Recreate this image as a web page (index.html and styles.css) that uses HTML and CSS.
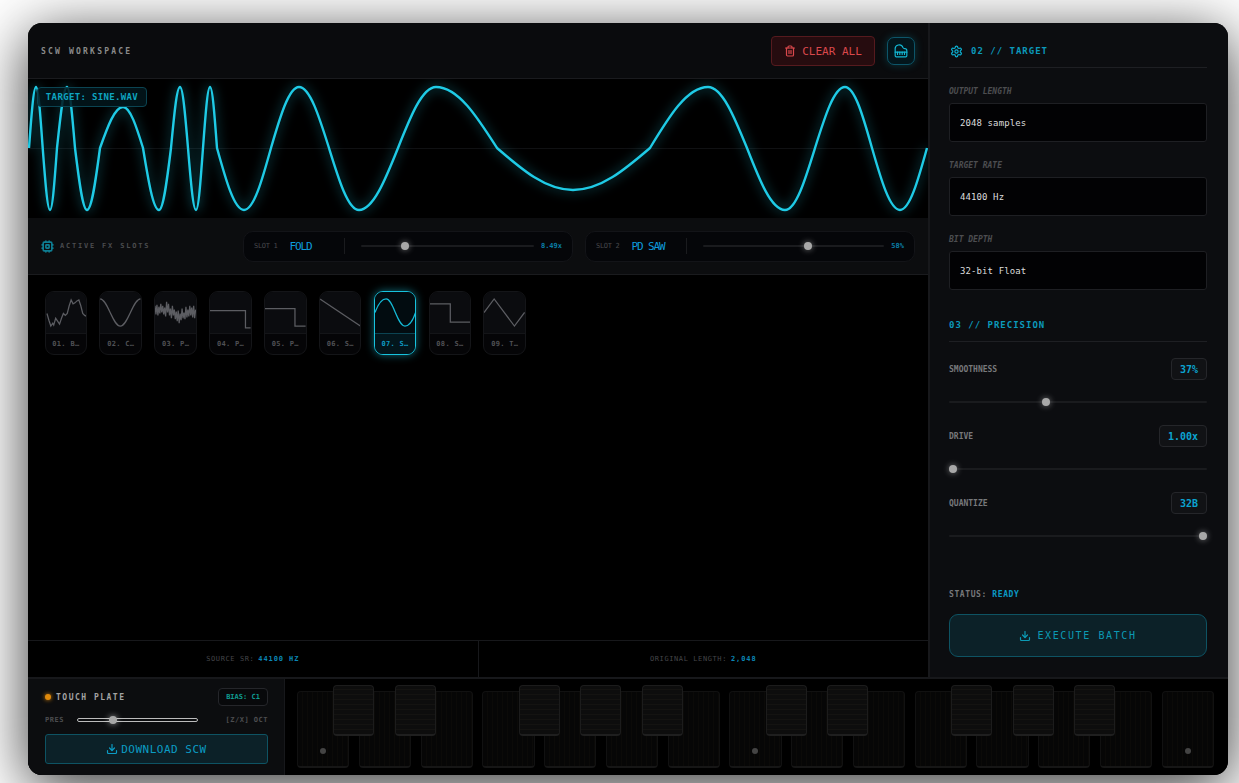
FILE: index.html
```html
<!DOCTYPE html>
<html lang="en-US">
  <head>
    <title>SCW Workspace</title>
    <meta charset="utf-8" />
    <link rel="stylesheet" href="styles.css">
  </head>
  <body>
    <div class="app">
      <div class="top">
        <main class="workspace">
          <header class="ws-header">
            <div class="ws-title">SCW WORKSPACE</div>
            <div class="ws-actions">
              <button class="btn-clear">
                <svg class="icon" viewBox="0 0 24 24"><path d="M3 6h18"/><path d="M19 6v14c0 1-1 2-2 2H7c-1 0-2-1-2-2V6"/><path d="M8 6V4c0-1 1-2 2-2h4c1 0 2 1 2 2v2"/><path d="M10 11v6"/><path d="M14 11v6"/></svg>
                CLEAR ALL
              </button>
              <button class="btn-piano">
                <svg class="icon-lg" viewBox="0 0 24 24"><path d="M18.5 8c-1.4 0-2.6-.8-3.2-2A6.87 6.87 0 0 0 2 9v11a2 2 0 0 0 2 2h16a2 2 0 0 0 2-2v-8.5C22 9.6 20.4 8 18.5 8"/><path d="M2 14h20"/><path d="M6 14v4"/><path d="M10 14v4"/><path d="M14 14v4"/><path d="M18 14v4"/></svg>
              </button>
            </div>
          </header>

          <section class="scope">
            <svg class="scope-svg" viewBox="28 79 900 139">
              <path class="scope-mid" d="M28 148.5H928"/>
              <path class="scope-wave" d="M29 148C31.3 116.8 33.5 87 36 87C38.4 87 40.5 116.8 42.7 148C45.1 179.8 47.4 210 50 210C52.5 210 54.7 179.8 57 148C60.3 116.8 63.4 87 67 87C69.9 87 72.4 116.8 75 148C78.9 179.8 82.7 210 87 210C91.7 210 95.8 179.8 100 148C107.5 127 114.7 107 123 107C130.2 107 136.5 127 143 148C148.2 179.8 153.2 210 159 210C163.3 210 167.1 179.8 171 148C173.9 116.8 176.7 87 180 87C182.9 87 185.4 116.8 188 148C190.6 179.8 193.1 210 196 210C198.5 210 200.7 179.8 203 148C205.3 116.8 207.5 87 210 87C212.5 87 214.7 116.8 217 148C225.8 179.8 234.2 210 244 210C253.8 210 262.2 179.8 271 148C280.1 116.8 288.9 87 299 87C309.9 87 319.2 116.8 329 148C338.8 179.8 348.1 210 359 210C373.1 210 385.3 179.8 398 148C410.4 116.8 422.2 87 436 87C458.1 87 477.1 116.8 497 148C521.8 169.5 545.5 190 573 190C600.9 190 624.9 169.5 650 148C668.9 116.8 687 87 708 87C722.1 87 734.3 116.8 747 148C759.4 179.8 771.2 210 785 210C795.9 210 805.2 179.8 815 148C824.8 116.8 834.1 87 845 87C854.8 87 863.2 116.8 872 148C881.1 179.8 889.9 210 900 210C909.8 210 918.2 179.8 927 148"/>
            </svg>
            <div class="scope-tag">TARGET: SINE.WAV</div>
          </section>

          <section class="fx-row">
            <div class="fx-title">
              <svg class="icon-cpu" viewBox="0 0 24 24"><rect x="4" y="4" width="16" height="16" rx="2"/><rect x="9" y="9" width="6" height="6" rx="1"/><path d="M15 2v2M15 20v2M2 15h2M2 9h2M20 15h2M20 9h2M9 2v2M9 20v2"/></svg>
              ACTIVE FX SLOTS
            </div>
            <div class="fx-slots">
              <div class="slot">
                <div class="slot-head"><span class="slot-num">SLOT 1</span><span class="slot-name">FOLD</span></div>
                <input class="range" type="range" min="0" max="100" value="24">
                <span class="slot-val">8.49x</span>
              </div>
              <div class="slot">
                <div class="slot-head"><span class="slot-num">SLOT 2</span><span class="slot-name">PD SAW</span></div>
                <input class="range" type="range" min="0" max="100" value="58">
                <span class="slot-val">58%</span>
              </div>
            </div>
          </section>

          <section class="bank">
            <div class="wave-card">
              <svg viewBox="0 0 42 42"><path d="M1 22L3 29L5 35L7 32L8 34L10 27L12 30L14 33L16 27L18 22L20 24L22 22L24 14L26 8L28 12L30 11L32 9L34 8L36 14L38 22L40 24L42 25"/></svg>
              <div class="wave-name">01. B…</div>
            </div>
            <div class="wave-card">
              <svg viewBox="0 0 42 42"><path d="M0 7C8 7 13 35 21 35C29 35 34 7 42 7"/></svg>
              <div class="wave-name">02. C…</div>
            </div>
            <div class="wave-card">
              <svg viewBox="0 0 42 42"><path d="M0 14L1 23L2 13L3 24L4 15L5 22L6 12L7 21L8 14L9 23L10 16L11 25L12 10L13 21L14 12L15 24L16 17L17 27L18 14L19 24L20 18L21 28L22 20L23 30L24 19L25 32L26 22L27 29L28 17L29 27L30 21L31 28L32 15L33 26L34 18L35 25L36 14L37 24L38 16L39 26L40 14L41 27L42 18"/></svg>
              <div class="wave-name">03. P…</div>
            </div>
            <div class="wave-card">
              <svg viewBox="0 0 42 42"><path d="M0 19H36.7V37H42"/></svg>
              <div class="wave-name">04. P…</div>
            </div>
            <div class="wave-card">
              <svg viewBox="0 0 42 42"><path d="M0 17H31V35H42"/></svg>
              <div class="wave-name">05. P…</div>
            </div>
            <div class="wave-card">
              <svg viewBox="0 0 42 42"><path d="M0 7L42 35"/></svg>
              <div class="wave-name">06. S…</div>
            </div>
            <div class="wave-card active">
              <svg viewBox="0 0 42 42"><path d="M0 21C3 13 7 7 11.5 7C19 7 23 35 31 35C35 35 39 30 42 21"/></svg>
              <div class="wave-name">07. S…</div>
            </div>
            <div class="wave-card">
              <svg viewBox="0 0 42 42"><path d="M0 12H21V31H42"/></svg>
              <div class="wave-name">08. S…</div>
            </div>
            <div class="wave-card">
              <svg viewBox="0 0 42 42"><path d="M0 21L10.5 7L31.5 35L42 21"/></svg>
              <div class="wave-name">09. T…</div>
            </div>
          </section>

          <footer class="stats">
            <div class="stat">SOURCE SR: <b>44100 HZ</b></div>
            <div class="stat">ORIGINAL LENGTH: <b>2,048</b></div>
          </footer>
        </main>

        <aside class="panel">
          <h2 class="panel-head">
            <svg class="icon-gear" viewBox="0 0 24 24"><path d="M12.22 2h-.44a2 2 0 0 0-2 2v.18a2 2 0 0 1-1 1.73l-.43.25a2 2 0 0 1-2 0l-.15-.08a2 2 0 0 0-2.73.73l-.22.38a2 2 0 0 0 .73 2.73l.15.1a2 2 0 0 1 1 1.72v.51a2 2 0 0 1-1 1.74l-.15.09a2 2 0 0 0-.73 2.73l.22.38a2 2 0 0 0 2.73.73l.15-.08a2 2 0 0 1 2 0l.43.25a2 2 0 0 1 1 1.73V20a2 2 0 0 0 2 2h.44a2 2 0 0 0 2-2v-.18a2 2 0 0 1 1-1.73l.43-.25a2 2 0 0 1 2 0l.15.08a2 2 0 0 0 2.73-.73l.22-.39a2 2 0 0 0-.73-2.73l-.15-.08a2 2 0 0 1-1-1.74v-.5a2 2 0 0 1 1-1.74l.15-.09a2 2 0 0 0 .73-2.73l-.22-.38a2 2 0 0 0-2.73-.73l-.15.08a2 2 0 0 1-2 0l-.43-.25a2 2 0 0 1-1-1.73V4a2 2 0 0 0-2-2z"/><circle cx="12" cy="12" r="3"/></svg>
            02 // TARGET
          </h2>
          <div class="field">
            <label>OUTPUT LENGTH</label>
            <div class="select">2048 samples</div>
          </div>
          <div class="field">
            <label>TARGET RATE</label>
            <div class="select">44100 Hz</div>
          </div>
          <div class="field">
            <label>BIT DEPTH</label>
            <div class="select">32-bit Float</div>
          </div>

          <h2 class="panel-head second">03 // PRECISION</h2>
          <div class="param">
            <div class="param-top"><span>SMOOTHNESS</span><span class="param-val">37%</span></div>
            <input class="range" type="range" min="0" max="100" value="37">
          </div>
          <div class="param">
            <div class="param-top"><span>DRIVE</span><span class="param-val">1.00x</span></div>
            <input class="range" type="range" min="0" max="100" value="0">
          </div>
          <div class="param">
            <div class="param-top"><span>QUANTIZE</span><span class="param-val">32B</span></div>
            <input class="range" type="range" min="0" max="100" value="100">
          </div>

          <div class="status">STATUS: <b>READY</b></div>
          <button class="btn-run">
            <svg class="icon" viewBox="0 0 24 24"><path d="M21 15v4a2 2 0 0 1-2 2H5a2 2 0 0 1-2-2v-4"/><path d="M7 10l5 5 5-5"/><path d="M12 15V3"/></svg>
            EXECUTE BATCH
          </button>
        </aside>
      </div>

      <div class="bottom">
        <div class="touch">
          <div class="touch-top">
            <div class="touch-title"><span class="led"></span>TOUCH PLATE</div>
            <div class="bias">BIAS: C1</div>
          </div>
          <div class="touch-mid">
            <span>PRES</span>
            <input class="range pres" type="range" min="0" max="100" value="28">
            <span>[Z/X] OCT</span>
          </div>
          <button class="btn-download">
            <svg class="icon" viewBox="0 0 24 24"><path d="M21 15v4a2 2 0 0 1-2 2H5a2 2 0 0 1-2-2v-4"/><path d="M7 10l5 5 5-5"/><path d="M12 15V3"/></svg>
            DOWNLOAD SCW
          </button>
        </div>
        <div class="keys">
          <div class="key"><i class="sharp"></i><i class="c-dot"></i></div>
          <div class="key"><i class="sharp"></i></div>
          <div class="key"></div>
          <div class="key"><i class="sharp"></i></div>
          <div class="key"><i class="sharp"></i></div>
          <div class="key"><i class="sharp"></i></div>
          <div class="key"></div>
          <div class="key"><i class="sharp"></i><i class="c-dot"></i></div>
          <div class="key"><i class="sharp"></i></div>
          <div class="key"></div>
          <div class="key"><i class="sharp"></i></div>
          <div class="key"><i class="sharp"></i></div>
          <div class="key"><i class="sharp"></i></div>
          <div class="key"></div>
          <div class="key"><i class="c-dot"></i></div>
        </div>
      </div>
    </div>
  </body>
</html>
```

FILE: styles.css
```css
html {
  box-sizing: border-box;
}
*,
*::before,
*::after {
  box-sizing: inherit;
}
body {
  margin: 0;
  height: 783px;
  overflow: hidden;
  background: #fff;
  font-family: "DejaVu Sans Mono", "Liberation Mono", monospace;
}
button {
  font-family: inherit;
  cursor: pointer;
}
.app {
  width: 1200px;
  height: 752px;
  margin: 23px 0 0 28px;
  display: flex;
  flex-direction: column;
  overflow: hidden;
  border-radius: 14px;
  background: #000;
  box-shadow: 0 12px 60px rgba(0, 0, 0, 0.8);
}
.top {
  display: flex;
  height: 656px;
  border-bottom: 2px solid #17181b;
}
.icon,
.icon-lg,
.icon-cpu,
.icon-gear {
  fill: none;
  stroke: currentColor;
  stroke-width: 2;
  stroke-linecap: round;
  stroke-linejoin: round;
}
.icon {
  width: 12px;
  height: 12px;
  stroke-width: 2.4;
}
.icon-lg {
  width: 14px;
  height: 14px;
}
.icon-cpu {
  width: 13px;
  height: 13px;
  stroke-width: 3;
  color: #0e7d92;
}
.icon-gear {
  width: 13px;
  height: 13px;
  stroke-width: 2.2;
  color: #0cb0d2;
}

/* left side */
.workspace {
  width: 902px;
  display: flex;
  flex-direction: column;
  border-right: 2px solid #17181b;
}
.ws-header {
  height: 56px;
  padding: 1px 13px 0;
  display: flex;
  align-items: center;
  justify-content: space-between;
  background: #0a0b0d;
  border-bottom: 1px solid #1a1b1e;
}
.ws-title {
  font-size: 8px;
  font-weight: bold;
  letter-spacing: 2.2px;
  color: #8b8b8b;
}
.ws-actions {
  display: flex;
  align-items: center;
  gap: 12px;
}
.btn-clear {
  width: 104px;
  height: 30px;
  display: flex;
  align-items: center;
  justify-content: center;
  gap: 6px;
  padding: 0;
  font-size: 11px;
  color: #d9484c;
  background: #260c0f;
  border: 1px solid #561a1e;
  border-radius: 4px;
}
.btn-piano {
  width: 28px;
  height: 28px;
  display: flex;
  align-items: center;
  justify-content: center;
  padding: 0;
  color: #14b8d4;
  background: #03161c;
  border: 1px solid #0d5569;
  border-radius: 7px;
  box-shadow: 0 0 8px rgba(6, 182, 212, 0.25);
}

.scope {
  position: relative;
  height: 139px;
  background: #000;
}
.scope-svg {
  display: block;
  width: 900px;
  height: 139px;
}
.scope-mid {
  fill: none;
  stroke: #101113;
  stroke-width: 1;
}
.scope-wave {
  fill: none;
  stroke: #1fcbe6;
  stroke-width: 2.4px;
  filter: drop-shadow(0 0 6px rgba(34, 211, 238, 0.6));
}
.scope-tag {
  position: absolute;
  left: 9px;
  top: 8px;
  width: 110px;
  height: 20px;
  display: flex;
  align-items: center;
  justify-content: center;
  font-size: 9px;
  font-weight: bold;
  letter-spacing: 0.35px;
  color: #0ea5c0;
  background: rgba(2, 22, 28, 0.85);
  border: 1px solid #0b4452;
  border-radius: 4px;
}

.fx-row {
  height: 57px;
  padding: 0 13px;
  display: flex;
  align-items: center;
  justify-content: space-between;
  background: #0c0d0f;
  border-bottom: 1px solid #1a1b1e;
}
.fx-title {
  display: flex;
  align-items: center;
  gap: 6px;
  font-size: 7px;
  font-weight: bold;
  letter-spacing: 1.8px;
  color: #4a4b4e;
}
.fx-slots {
  display: flex;
  gap: 12px;
}
.slot {
  width: 330px;
  height: 31px;
  padding: 0 10px;
  display: flex;
  align-items: center;
  gap: 7px;
  background: #050609;
  border: 1px solid #131418;
  border-radius: 10px;
}
.slot-head {
  width: 91px;
  height: 16px;
  margin-right: 9px;
  display: flex;
  align-items: center;
  gap: 12px;
  border-right: 1px solid #1a1b1e;
}
.slot-num {
  font-size: 7px;
  color: #47484c;
  letter-spacing: -0.3px;
}
.slot-name {
  font-size: 11px;
  letter-spacing: -1.1px;
  color: #0e9bdc;
}
.slot-val {
  font-size: 7px;
  font-weight: bold;
  color: #0a7fa8;
}

/* sliders */
.range {
  -webkit-appearance: none;
  appearance: none;
  display: block;
  flex: 1;
  min-width: 0;
  width: 100%;
  height: 8px;
  margin: 0;
  background: transparent;
}
.range::-webkit-slider-runnable-track {
  height: 2px;
  background: #1a1b1e;
  border-radius: 1px;
}
.range::-webkit-slider-thumb {
  -webkit-appearance: none;
  width: 8px;
  height: 8px;
  margin-top: -3px;
  border-radius: 50%;
  background: #a8a8a8;
  box-shadow: 0 0 6px rgba(255, 255, 255, 0.45);
}

/* wave bank */
.bank {
  flex: 1;
  padding: 16px 16.6px;
  display: flex;
  align-items: flex-start;
  gap: 12.275px;
  background: #000;
}
.wave-card {
  width: 42.6px;
  height: 64px;
  overflow: hidden;
  background: #050507;
  border: 1px solid #141518;
  border-radius: 9px;
}
.wave-card svg {
  display: block;
  width: 100%;
  height: 42px;
  background: #0b0c0f;
  border-bottom: 1px solid #141518;
  fill: none;
  stroke: #5c5d62;
  stroke-width: 1.3;
}
.wave-name {
  height: 21px;
  line-height: 21px;
  text-align: center;
  font-size: 7px;
  font-weight: bold;
  letter-spacing: 0.3px;
  white-space: nowrap;
  color: #505155;
}
.wave-card.active {
  border-color: #17c3de;
  box-shadow: 0 0 8px rgba(34, 211, 238, 0.5);
}
.wave-card.active svg {
  background: #020c10;
  border-bottom-color: #0b4452;
  stroke: #14b8d4;
}
.wave-card.active .wave-name {
  color: #0e9bc4;
  background: #03161c;
}

.stats {
  height: 37px;
  display: flex;
  background: #000;
  border-top: 1px solid #17181b;
}
.stat {
  flex: 1;
  display: flex;
  align-items: center;
  justify-content: center;
  gap: 4px;
  font-size: 7px;
  letter-spacing: 0.6px;
  color: #45464a;
}
.stat:first-child {
  border-right: 1px solid #17181b;
}
.stat b {
  letter-spacing: 0.9px;
  color: #0b86b4;
}

/* right side */
.panel {
  flex: 1;
  padding: 21px 21px 20px 19px;
  display: flex;
  flex-direction: column;
  background: #0c0d10;
}
.panel-head {
  height: 24px;
  margin: 0 0 20px;
  padding: 0 0 9px 1px;
  display: flex;
  align-items: center;
  gap: 8px;
  font-size: 9px;
  font-weight: bold;
  letter-spacing: 1px;
  color: #0b99bb;
  border-bottom: 1px solid #1e1f23;
}
.panel-head.second {
  margin-top: 1px;
  margin-bottom: 0;
  height: 31px;
  padding: 0 0 2px;
}
.field {
  margin-bottom: 20px;
}
.field label {
  display: block;
  height: 15px;
  line-height: 8px;
  font-size: 8px;
  font-style: italic;
  font-weight: bold;
  color: #4c4d50;
}
.select {
  height: 39px;
  padding: 0 10px;
  display: flex;
  align-items: center;
  font-size: 9px;
  letter-spacing: 0.1px;
  color: #dcdcdc;
  background: #020204;
  border: 1px solid #1e1f23;
  border-radius: 3px;
}
.param {
  margin-top: 16px;
  height: 51px;
}
.param-top {
  height: 22px;
  display: flex;
  align-items: center;
  justify-content: space-between;
  font-size: 8px;
  font-weight: bold;
  color: #77787b;
}
.param-val {
  height: 22px;
  padding: 0 8px;
  display: flex;
  align-items: center;
  font-size: 10px;
  color: #0ba3d0;
  background: #111215;
  border: 1px solid #25262a;
  border-radius: 4px;
}
.param .range {
  margin-top: 18px;
}
.status {
  margin-top: auto;
  margin-bottom: 15px;
  font-size: 8px;
  font-weight: bold;
  letter-spacing: 0.6px;
  color: #77787b;
}
.status b {
  color: #0b99c4;
}
.btn-run {
  width: 258px;
  height: 43px;
  display: flex;
  align-items: center;
  justify-content: center;
  gap: 6px;
  padding: 0;
  font-size: 10px;
  letter-spacing: 1.6px;
  color: #0c9ab4;
  background: #0c2128;
  border: 1px solid #0e5363;
  border-radius: 9px;
}

/* bottom strip */
.bottom {
  flex: 1;
  display: flex;
  background: #000;
}
.touch {
  width: 257px;
  padding: 8px 16px 10px 17px;
  display: flex;
  flex-direction: column;
  background: #0c0d0f;
  border-right: 1px solid #17181b;
}
.touch-top {
  height: 20px;
  display: flex;
  align-items: center;
  justify-content: space-between;
}
.touch-title {
  display: flex;
  align-items: center;
  gap: 5px;
  font-size: 8px;
  font-weight: bold;
  letter-spacing: 1.5px;
  color: #a3a3a3;
}
.led {
  width: 6px;
  height: 6px;
  border-radius: 50%;
  background: #e08a0b;
  box-shadow: 0 0 4px #e08a0b;
}
.bias {
  width: 50px;
  height: 18px;
  display: flex;
  align-items: center;
  justify-content: center;
  font-size: 7px;
  font-weight: bold;
  color: #0f9c92;
  background: #08090b;
  border: 1px solid #25262a;
  border-radius: 4px;
}
.touch-mid {
  height: 20px;
  margin: 3px 0 4px;
  display: flex;
  align-items: center;
  gap: 13px;
  font-size: 7px;
  font-weight: bold;
  letter-spacing: 0.5px;
  color: #4c4d50;
}
.touch-mid span:last-child {
  margin-left: 15px;
}
.range.pres {
  height: 10px;
}
.range.pres::-webkit-slider-runnable-track {
  height: 4px;
  background: #0c0d0f;
  border: 1px solid #bcbcbc;
  border-radius: 2px;
}
.range.pres::-webkit-slider-thumb {
  margin-top: -3px;
  background: #a8a8a8;
  box-shadow: 0 0 6px rgba(255, 255, 255, 0.6);
}
.btn-download {
  height: 30px;
  display: flex;
  align-items: center;
  justify-content: center;
  gap: 3px;
  padding: 0;
  font-size: 11px;
  letter-spacing: 0.5px;
  color: #0b9cc4;
  background: #0c2128;
  border: 1px solid #0e5363;
  border-radius: 3px;
}
.keys {
  flex: 1;
  padding: 12px 14px 7px 12px;
  display: grid;
  grid-template-columns: repeat(15, 1fr);
  gap: 9.3px;
}
.key {
  position: relative;
  background: repeating-linear-gradient(90deg, #060606 0 4px, #0b0a08 4px 5px);
  border: 1px solid #111;
  border-bottom: 2px solid #161616;
  border-radius: 4px;
}
.sharp {
  position: absolute;
  z-index: 1;
  top: -7px;
  right: -26px;
  width: 41px;
  height: 51px;
  background: repeating-linear-gradient(0deg, #0d0d0d 0 4px, #141311 4px 5px);
  border: 1px solid #1c1c1c;
  border-bottom: 2px solid #1f1f1f;
  border-radius: 4px;
}
.c-dot {
  position: absolute;
  left: 50%;
  bottom: 12px;
  width: 6px;
  height: 6px;
  margin-left: -3px;
  border-radius: 50%;
  background: #444;
}
```
